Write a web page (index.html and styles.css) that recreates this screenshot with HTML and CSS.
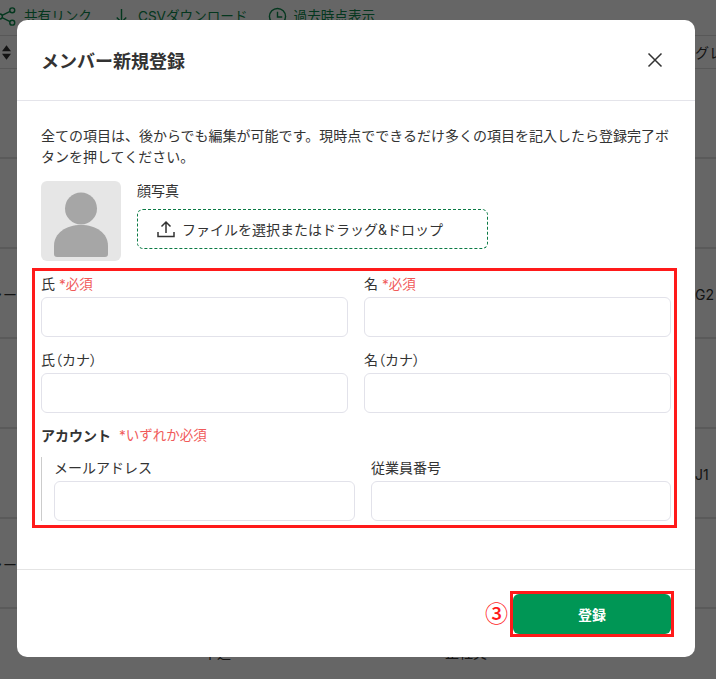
FILE: index.html
```html
<!DOCTYPE html>
<html lang="ja">
<head>
<meta charset="utf-8">
<title>メンバー新規登録</title>
<link rel="stylesheet" href="styles.css">
</head>
<body>
<div class="page">
  <div class="toolbar">
    <span class="tool"><svg class="tool-icon" viewBox="0 0 20 20"><circle cx="2" cy="10" r="2.600"/><circle cx="15" cy="3.500" r="2.600"/><circle cx="15" cy="16.500" r="2.600"/><path d="M4.300 8.800 12.700 4.700M4.300 11.200l8.400 4.100"/></svg>共有リンク</span>
    <span class="tool"><svg class="tool-icon" viewBox="0 0 20 20"><path d="M10 2v14M5 11l5 5 5-5M1.500 17.500h2M16.500 17.500h2"/></svg>CSVダウンロード</span>
    <span class="tool"><svg class="tool-icon" viewBox="0 0 20 20"><circle cx="10" cy="10" r="8.500"/><path d="M10 5v5.500h5"/></svg>過去時点表示</span>
  </div>
  <div class="table-head"><svg class="sort" viewBox="0 0 10 16"><path d="M5 0l5 6.500H0zM5 16 0 9.500h10z"/></svg><span class="head-end">グレード</span></div>
  <div class="row"></div>
  <div class="row"></div>
  <div class="row"><span class="row-l">ャー</span><span class="row-r">G2</span></div>
  <div class="row"></div>
  <div class="row"><span></span><span class="row-r">J1</span></div>
  <div class="row"><span class="row-l">ャー</span></div>
  <div class="row-foot"><span>十道</span><span>正社員</span></div>
</div>
<div class="overlay"></div>
<main class="modal">
  <header class="modal-head">
    <h1 class="modal-title">メンバー新規登録</h1>
    <svg class="close" viewBox="0 0 16 16"><path d="M1.500 1.500l13 13M14.500 1.500l-13 13"/></svg>
  </header>
  <section class="modal-body">
    <p class="intro">全ての項目は、後からでも編集が可能です。現時点でできるだけ多くの項目を記入したら登録完了ボタンを押してください。</p>
    <div class="photo-row">
      <div class="avatar"><svg viewBox="0 0 80 80"><circle cx="40" cy="27.500" r="16"/><path d="M13 73V65c0-13 12-21 27-21s27 8 27 21v8q0 3-3 3H16q-3 0-3-3z"/></svg></div>
      <div class="photo-side">
        <div class="label">顔写真</div>
        <div class="drop"><svg class="upload" viewBox="0 0 18 18"><path d="M9 13V2M4.500 6.500 9 2l4.500 4.500M1 12v4.500h16V12"/></svg>ファイルを選択またはドラッグ&amp;ドロップ</div>
      </div>
    </div>
    <div class="form-box">
      <div class="grid-two">
        <div class="field"><div class="label">氏 <span class="req">*必須</span></div><div class="input"></div></div>
        <div class="field"><div class="label">名 <span class="req">*必須</span></div><div class="input"></div></div>
        <div class="field"><div class="label">氏<span class="paren">（</span>カナ<span class="paren">）</span></div><div class="input"></div></div>
        <div class="field"><div class="label">名<span class="paren">（</span>カナ<span class="paren">）</span></div><div class="input"></div></div>
      </div>
      <div class="account-title"><b>アカウント</b><span class="req">*いずれか必須</span></div>
      <div class="account">
        <div class="field"><div class="label">メールアドレス</div><div class="input"></div></div>
        <div class="field"><div class="label">従業員番号</div><div class="input"></div></div>
      </div>
    </div>
  </section>
  <footer class="modal-foot">
    <span class="step">③</span>
    <div class="submit-frame"><button class="submit">登録</button></div>
  </footer>
</main>
</body>
</html>
```
FILE: styles.css
```css
* { box-sizing: border-box; }
html, body { margin: 0; height: 100%; }
body {
  position: relative;
  width: 716px;
  height: 679px;
  overflow: hidden;
  background: #fff;
  font-family: "Inter", "Noto Sans CJK JP", sans-serif;
  font-size: 14px;
  color: #333;
}
.page { height: 679px; overflow: hidden; }
.toolbar {
  height: 35px;
  display: flex;
  gap: 20px;
  padding-top: 5px;
  margin-left: -2px;
  font-size: 13.600px;
  color: #0a8a4c;
  line-height: 22px;
}
.tool { display: flex; align-items: center; height: 22px; white-space: nowrap; }
.tool-icon { width: 19px; height: 19px; margin-right: 7px; fill: none; stroke: currentColor; stroke-width: 1.500; }
.table-head {
  height: 34px;
  border-top: 1px solid #ddd;
  border-bottom: 1px solid #ddd;
  display: flex;
  align-items: center;
  justify-content: space-between;
  padding-left: 2px;
  overflow: hidden;
}
.sort { width: 9px; height: 15px; fill: #333; }
.head-end { margin-right: -35px; white-space: nowrap; }
.row {
  height: 90px;
  display: flex;
  align-items: center;
  justify-content: space-between;
  border-bottom: 2px solid #e2e2e2;
  padding-top: 2px;
  white-space: nowrap;
}
.row-l { margin-left: -11px; }
.row-r { margin-left: auto; width: 21px; }
.row-foot { display: flex; gap: 214px; padding: 34px 0 0 203px; line-height: 20px; }
.overlay { position: absolute; inset: 0; background: rgba(0, 0, 0, .6); }
.modal {
  position: absolute;
  left: 17px;
  top: 20px;
  width: 678px;
  height: 637px;
  background: #fff;
  border-radius: 10px;
  display: flex;
  flex-direction: column;
}
.modal-head {
  height: 81px;
  flex: none;
  border-bottom: 1px solid #e4e4ea;
  display: flex;
  align-items: center;
  justify-content: space-between;
  padding: 0 32px 0 24px;
}
.modal-title { margin: 0; font-size: 18px; font-weight: 700; color: #333; }
.close { width: 16px; height: 16px; fill: none; stroke: #333; stroke-width: 1.500; }
.modal-body { flex: 1; padding: 24px 24px 0; border-bottom: 1px solid #e4e4e4; }
.intro { margin: 0; line-height: 21px; color: #333; }
.photo-row { display: flex; gap: 16px; margin-top: 14px; }
.avatar { width: 80px; height: 80px; border-radius: 6px; background: #e6e6e6; overflow: hidden; }
.avatar svg { display: block; width: 80px; height: 80px; fill: #a6a6a6; }
.label { line-height: 20px; color: #333; }
.photo-side { flex: 1; }
.drop {
  width: 351px;
  height: 40px;
  margin-top: 8px;
  border: 1px dashed #0a7a44;
  border-radius: 6px;
  display: flex;
  align-items: center;
  padding-left: 19px;
  color: #333;
}
.upload { width: 18px; height: 18px; margin-right: 7px; fill: none; stroke: #333; stroke-width: 1.500; }
.form-box {
  margin: 7px -6px 0 -9px;
  height: 260px;
  border: 3px solid #ff1a1a;
  padding: 3px 3px 0 6px;
}
.grid-two { display: grid; grid-template-columns: 307px 307px; column-gap: 16px; row-gap: 13px; }
.field .label { height: 19px; line-height: 19px; margin-bottom: 4px; }
.paren { font-feature-settings: "palt"; }
.input { height: 40px; border: 1px solid #e2e2ea; border-radius: 6px; background: #fff; }
.req { color: #f05a5a; font-size: 13.500px; line-height: 1; }
.account-title { height: 20px; margin-top: 13px; line-height: 20px; display: flex; align-items: center; gap: 8px; }
.account-title b { color: #333; }
.account {
  display: grid;
  grid-template-columns: 301px 300px;
  column-gap: 16px;
  margin-top: 11px;
  border-left: 1px solid #ccc;
  padding: 1px 0 0 12px;
}
.modal-foot {
  height: 87px;
  flex: none;
  display: flex;
  justify-content: flex-end;
  align-items: flex-start;
  gap: 2px;
  padding: 21px 21px 0 0;
}
.step { color: #ff1a1a; font-size: 23px; line-height: 42px; font-weight: 500; font-family: "Noto Sans CJK JP", sans-serif; }
.submit-frame { border: 3px solid #ff1a1a; width: 164px; height: 46px; }
.submit {
  display: block;
  width: 158px;
  height: 40px;
  border: 0;
  border-radius: 6px;
  background: #009655;
  color: #fff;
  font: 700 14px "Inter", "Noto Sans CJK JP", sans-serif;
}
```
